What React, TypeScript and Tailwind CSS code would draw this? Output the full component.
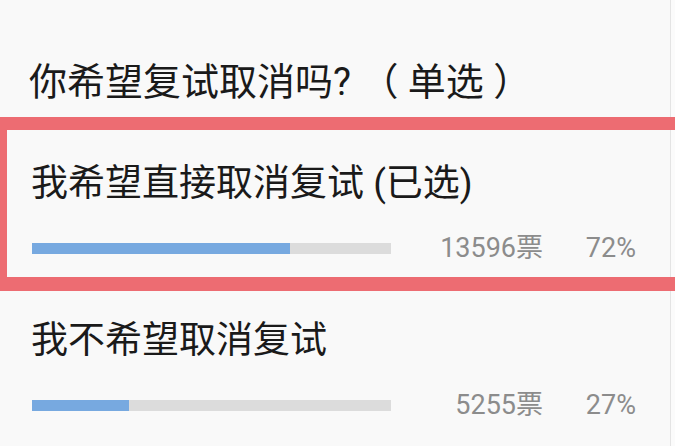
import React from 'react'

const options = [
  { label: '我希望直接取消复试 (已选)', votes: 13596, pct: 72, selected: true },
  { label: '我不希望取消复试', votes: 5255, pct: 27, selected: false },
]

function OptionRow({ label, votes, pct }: { label: string; votes: number; pct: number }) {
  return (
    <div className="flex flex-col">
      <p className="pl-[31px] text-[37px] leading-none h-[37px] text-[#1a1a1a]">{label}</p>
      <div className="flex items-center mt-[40px] h-[12px]">
        <div className="ml-[32px] w-[359px] h-[11px] bg-[#dcdcdc]">
          <div className="h-full bg-[#77a9e0]" style={{ width: `${pct}%` }} />
        </div>
        <span className="w-[152px] text-right text-[27px] leading-none text-[#8c8c8c]">{votes}票</span>
        <span className="w-[93px] text-right text-[27px] leading-none text-[#8c8c8c]">{pct}%</span>
      </div>
    </div>
  )
}

export default function App() {
  return (
    <div
      className="relative w-[675px] h-[446px] overflow-hidden bg-[#fbfbfb]"
      style={{ fontFamily: 'Roboto, "Noto Sans CJK SC", sans-serif' }}
    >
      <div className="w-[671px] h-full bg-[#f9f9f9] border-r border-[#e4e4e4] flex flex-col">
        {/* Question */}
        <h2 className="pt-[63px] pl-[29px] text-[38px] leading-none text-[#1a1a1a] font-normal whitespace-pre">
          你希望复试取消吗? （ 单选 ）
        </h2>

        {/* Options */}
        <div className="mt-[64px] flex flex-col gap-[68px]">
          {options.map((o) => (
            <OptionRow key={o.label} label={o.label} votes={o.votes} pct={o.pct} />
          ))}
        </div>
      </div>

      {/* highlight frame around the selected option */}
      <div className="absolute left-0 top-[117px] w-[700px] h-[174px] border-[#ed6c72] border-l-[7px] border-t-[13px] border-b-[14px]" />
    </div>
  )
}
